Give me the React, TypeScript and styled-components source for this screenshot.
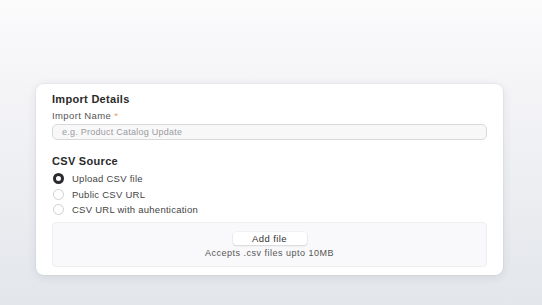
import styled, { createGlobalStyle } from 'styled-components';

const GlobalStyle = createGlobalStyle`
  html, body {
    margin: 0;
    padding: 0;
  }
  body {
    font-family: 'Liberation Sans', Arial, sans-serif;
    background: linear-gradient(180deg, #fbfbfc 0%, #f4f4f7 30%, #e9ebef 75%, #e3e6eb 100%);
    height: 305px;
    overflow: hidden;
  }
`;

const Page = styled.div`
  height: 305px;
  box-sizing: border-box;
  padding: 84px 39px 0 36px;
`;

const Card = styled.section`
  background: #ffffff;
  border-radius: 8px;
  box-shadow: 0 2px 10px rgba(40, 50, 70, 0.1), 0 0 0 1px rgba(0, 0, 0, 0.03);
  padding: 8px 16px 8px;
  display: flex;
  flex-direction: column;
`;

const SectionTitle = styled.h2<{ $top?: number }>`
  margin: ${(p) => p.$top ?? 0}px 0 0;
  font-size: 11px;
  font-weight: 700;
  letter-spacing: 0.3px;
  line-height: 14px;
  color: #2a2a2a;
`;

const Label = styled.label`
  margin-top: 3px;
  font-size: 9.5px;
  letter-spacing: 0.4px;
  line-height: 13px;
  color: #555;

  span {
    color: #e8a070;
  }
`;

const Input = styled.input`
  margin-top: 2px;
  box-sizing: border-box;
  height: 16px;
  width: 100%;
  border: 1px solid #d8d9dd;
  border-radius: 5px;
  background: #f8f8f9;
  padding: 0 9px;
  font-family: inherit;
  font-size: 9px;
  letter-spacing: 0.25px;
  color: #333;

  &::placeholder {
    color: #9a9ba0;
  }
`;

const RadioList = styled.div`
  margin-top: 4px;
  display: flex;
  flex-direction: column;
  gap: 2.5px;
`;

const RadioRow = styled.div`
  display: flex;
  align-items: center;
  gap: 8px;
  height: 13px;
  padding-left: 1px;
  font-size: 9.5px;
  letter-spacing: 0.25px;
  color: #444;
`;

const RadioDot = styled.span<{ $checked?: boolean }>`
  box-sizing: border-box;
  width: 11px;
  height: 11px;
  border-radius: 50%;
  background: #fff;
  border: ${(p) => (p.$checked ? '3.5px solid #2a2a2e' : '1px solid #cfd0d4')};
`;

const DropZone = styled.div`
  margin-top: 6px;
  height: 45px;
  box-sizing: border-box;
  border: 1px solid #efeff2;
  border-radius: 4px;
  background: #f9f9fb;
  display: flex;
  flex-direction: column;
  align-items: center;
  justify-content: center;
  gap: 3px;
  padding-top: 2px;
`;

const AddButton = styled.button`
  width: 74px;
  height: 13px;
  border: none;
  border-radius: 3px;
  background: #fff;
  box-shadow: 0 1px 2px rgba(0, 0, 0, 0.12), 0 0 0 0.5px rgba(0, 0, 0, 0.06);
  font-family: inherit;
  font-size: 9.5px;
  letter-spacing: 0.4px;
  color: #333;
  padding: 0;
`;

const Hint = styled.p`
  margin: 0;
  font-size: 9px;
  letter-spacing: 0.5px;
  line-height: 11px;
  color: #555;
`;

const sources = ['Upload CSV file', 'Public CSV URL', 'CSV URL with auhentication'];

export default function App() {
  return (
    <>
      <GlobalStyle />
      <Page>
        <Card>
          <SectionTitle>Import Details</SectionTitle>
          <Label>
            Import Name <span>*</span>
          </Label>
          <Input placeholder="e.g. Product Catalog Update" />
          <SectionTitle $top={14}>CSV Source</SectionTitle>
          <RadioList>
            {sources.map((s, i) => (
              <RadioRow key={s}>
                <RadioDot $checked={i === 0} />
                {s}
              </RadioRow>
            ))}
          </RadioList>
          <DropZone>
            <AddButton>Add file</AddButton>
            <Hint>Accepts .csv files upto 10MB</Hint>
          </DropZone>
        </Card>
      </Page>
    </>
  );
}
